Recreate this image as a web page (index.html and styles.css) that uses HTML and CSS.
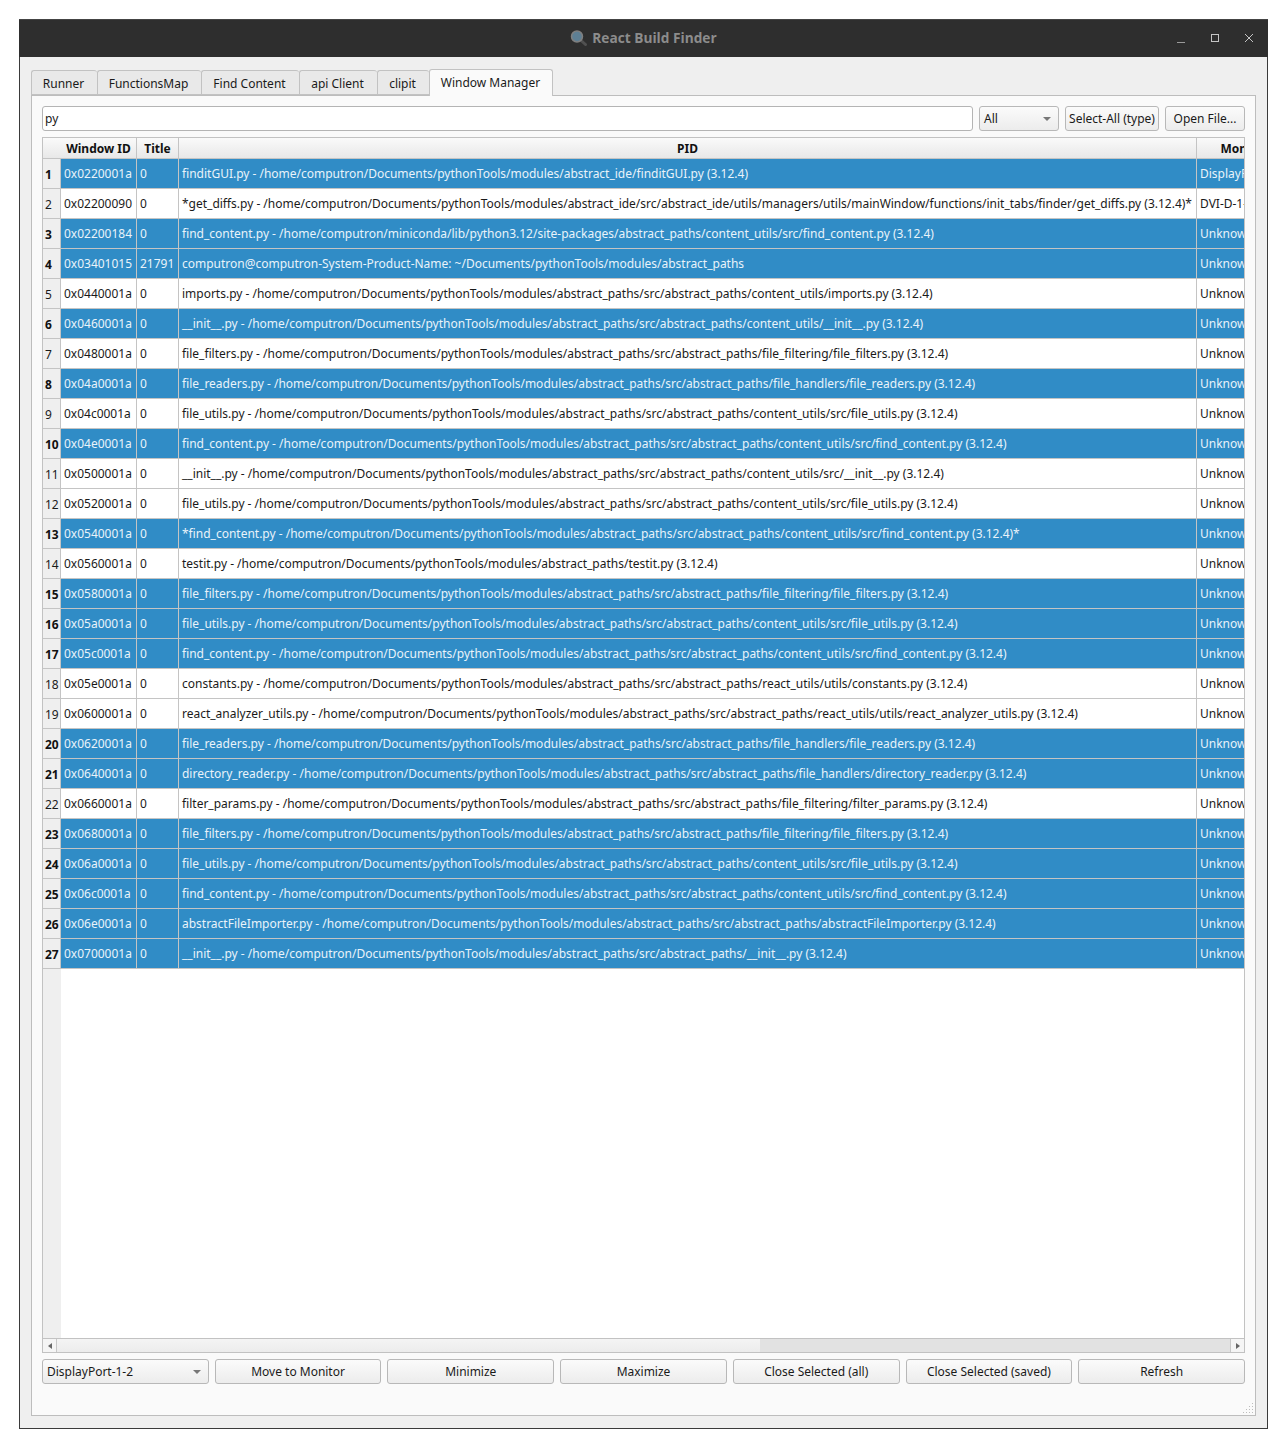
FILE: index.html
```html
<!DOCTYPE html>
<html lang="en">

<head>
    <meta charset="UTF-8">
    <title>React Build Finder</title>
    <link rel="stylesheet" href="styles.css">
</head>

<body>
    <div class="window">
        <!-- title bar -->
        <div class="titlebar">
            <div class="title">
                <svg class="title-icon" width="18" height="16" viewBox="0 0 18 16">
                    <line x1="10.5" y1="10" x2="15.5" y2="14.5" stroke="#505050" stroke-width="3" stroke-linecap="round"/>
                    <circle cx="7" cy="6.5" r="5.5" fill="#5e7f94" stroke="#7f7f7f" stroke-width="1.5"/>
                </svg>
                <span>React Build Finder</span>
            </div>
            <div class="controls">
                <svg width="10" height="10" viewBox="0 0 10 10"><line x1="1" y1="9.5" x2="9" y2="9.5" stroke="#9a9a9a"/></svg>
                <svg width="10" height="10" viewBox="0 0 10 10"><rect x="1.5" y="1.5" width="7" height="7" fill="none" stroke="#c4c4c4"/></svg>
                <svg width="10" height="10" viewBox="0 0 10 10"><path d="M1 1L9 9M9 1L1 9" stroke="#c4c4c4" fill="none"/></svg>
            </div>
        </div>

        <div class="content">
            <!-- tabs -->
            <div class="tabs">
                <div class="tab tab-1">Runner</div>
                <div class="tab tab-2">FunctionsMap</div>
                <div class="tab tab-3">Find Content</div>
                <div class="tab tab-4">api Client</div>
                <div class="tab tab-5">clipit</div>
                <div class="tab tab-active">Window Manager</div>
            </div>

            <div class="pane">
                <div class="toolbar">
                    <div class="search">py</div>
                    <div class="combo combo-type">All<span class="arrow"></span></div>
                    <div class="btn btn-select">Select-All (type)</div>
                    <div class="btn btn-open">Open File...</div>
                </div>

                <div class="table">
                    <div class="gutter"></div>
                    <div class="row head">
                        <div class="num"></div>
                        <div class="cell">Window ID</div>
                        <div class="cell">Title</div>
                        <div class="cell">PID</div>
                        <div class="cell">Monitor</div>
                    </div>
                    <div class="row sel"><div class="num">1</div><div class="cell">0x0220001a</div><div class="cell">0</div><div class="cell">finditGUI.py - /home/computron/Documents/pythonTools/modules/abstract_ide/finditGUI.py (3.12.4)</div><div class="cell">DisplayPort-1-2</div></div>
                    <div class="row"><div class="num">2</div><div class="cell">0x02200090</div><div class="cell">0</div><div class="cell">*get_diffs.py - /home/computron/Documents/pythonTools/modules/abstract_ide/src/abstract_ide/utils/managers/utils/mainWindow/functions/init_tabs/finder/get_diffs.py (3.12.4)*</div><div class="cell">DVI-D-1-1</div></div>
                    <div class="row sel"><div class="num">3</div><div class="cell">0x02200184</div><div class="cell">0</div><div class="cell">find_content.py - /home/computron/miniconda/lib/python3.12/site-packages/abstract_paths/content_utils/src/find_content.py (3.12.4)</div><div class="cell">Unknown</div></div>
                    <div class="row sel"><div class="num">4</div><div class="cell">0x03401015</div><div class="cell">21791</div><div class="cell">computron@computron-System-Product-Name: ~/Documents/pythonTools/modules/abstract_paths</div><div class="cell">Unknown</div></div>
                    <div class="row"><div class="num">5</div><div class="cell">0x0440001a</div><div class="cell">0</div><div class="cell">imports.py - /home/computron/Documents/pythonTools/modules/abstract_paths/src/abstract_paths/content_utils/imports.py (3.12.4)</div><div class="cell">Unknown</div></div>
                    <div class="row sel"><div class="num">6</div><div class="cell">0x0460001a</div><div class="cell">0</div><div class="cell">__init__.py - /home/computron/Documents/pythonTools/modules/abstract_paths/src/abstract_paths/content_utils/__init__.py (3.12.4)</div><div class="cell">Unknown</div></div>
                    <div class="row"><div class="num">7</div><div class="cell">0x0480001a</div><div class="cell">0</div><div class="cell">file_filters.py - /home/computron/Documents/pythonTools/modules/abstract_paths/src/abstract_paths/file_filtering/file_filters.py (3.12.4)</div><div class="cell">Unknown</div></div>
                    <div class="row sel"><div class="num">8</div><div class="cell">0x04a0001a</div><div class="cell">0</div><div class="cell">file_readers.py - /home/computron/Documents/pythonTools/modules/abstract_paths/src/abstract_paths/file_handlers/file_readers.py (3.12.4)</div><div class="cell">Unknown</div></div>
                    <div class="row"><div class="num">9</div><div class="cell">0x04c0001a</div><div class="cell">0</div><div class="cell">file_utils.py - /home/computron/Documents/pythonTools/modules/abstract_paths/src/abstract_paths/content_utils/src/file_utils.py (3.12.4)</div><div class="cell">Unknown</div></div>
                    <div class="row sel"><div class="num">10</div><div class="cell">0x04e0001a</div><div class="cell">0</div><div class="cell">find_content.py - /home/computron/Documents/pythonTools/modules/abstract_paths/src/abstract_paths/content_utils/src/find_content.py (3.12.4)</div><div class="cell">Unknown</div></div>
                    <div class="row"><div class="num">11</div><div class="cell">0x0500001a</div><div class="cell">0</div><div class="cell">__init__.py - /home/computron/Documents/pythonTools/modules/abstract_paths/src/abstract_paths/content_utils/src/__init__.py (3.12.4)</div><div class="cell">Unknown</div></div>
                    <div class="row"><div class="num">12</div><div class="cell">0x0520001a</div><div class="cell">0</div><div class="cell">file_utils.py - /home/computron/Documents/pythonTools/modules/abstract_paths/src/abstract_paths/content_utils/src/file_utils.py (3.12.4)</div><div class="cell">Unknown</div></div>
                    <div class="row sel"><div class="num">13</div><div class="cell">0x0540001a</div><div class="cell">0</div><div class="cell">*find_content.py - /home/computron/Documents/pythonTools/modules/abstract_paths/src/abstract_paths/content_utils/src/find_content.py (3.12.4)*</div><div class="cell">Unknown</div></div>
                    <div class="row"><div class="num">14</div><div class="cell">0x0560001a</div><div class="cell">0</div><div class="cell">testit.py - /home/computron/Documents/pythonTools/modules/abstract_paths/testit.py (3.12.4)</div><div class="cell">Unknown</div></div>
                    <div class="row sel"><div class="num">15</div><div class="cell">0x0580001a</div><div class="cell">0</div><div class="cell">file_filters.py - /home/computron/Documents/pythonTools/modules/abstract_paths/src/abstract_paths/file_filtering/file_filters.py (3.12.4)</div><div class="cell">Unknown</div></div>
                    <div class="row sel"><div class="num">16</div><div class="cell">0x05a0001a</div><div class="cell">0</div><div class="cell">file_utils.py - /home/computron/Documents/pythonTools/modules/abstract_paths/src/abstract_paths/content_utils/src/file_utils.py (3.12.4)</div><div class="cell">Unknown</div></div>
                    <div class="row sel"><div class="num">17</div><div class="cell">0x05c0001a</div><div class="cell">0</div><div class="cell">find_content.py - /home/computron/Documents/pythonTools/modules/abstract_paths/src/abstract_paths/content_utils/src/find_content.py (3.12.4)</div><div class="cell">Unknown</div></div>
                    <div class="row"><div class="num">18</div><div class="cell">0x05e0001a</div><div class="cell">0</div><div class="cell">constants.py - /home/computron/Documents/pythonTools/modules/abstract_paths/src/abstract_paths/react_utils/utils/constants.py (3.12.4)</div><div class="cell">Unknown</div></div>
                    <div class="row"><div class="num">19</div><div class="cell">0x0600001a</div><div class="cell">0</div><div class="cell">react_analyzer_utils.py - /home/computron/Documents/pythonTools/modules/abstract_paths/src/abstract_paths/react_utils/utils/react_analyzer_utils.py (3.12.4)</div><div class="cell">Unknown</div></div>
                    <div class="row sel"><div class="num">20</div><div class="cell">0x0620001a</div><div class="cell">0</div><div class="cell">file_readers.py - /home/computron/Documents/pythonTools/modules/abstract_paths/src/abstract_paths/file_handlers/file_readers.py (3.12.4)</div><div class="cell">Unknown</div></div>
                    <div class="row sel"><div class="num">21</div><div class="cell">0x0640001a</div><div class="cell">0</div><div class="cell">directory_reader.py - /home/computron/Documents/pythonTools/modules/abstract_paths/src/abstract_paths/file_handlers/directory_reader.py (3.12.4)</div><div class="cell">Unknown</div></div>
                    <div class="row"><div class="num">22</div><div class="cell">0x0660001a</div><div class="cell">0</div><div class="cell">filter_params.py - /home/computron/Documents/pythonTools/modules/abstract_paths/src/abstract_paths/file_filtering/filter_params.py (3.12.4)</div><div class="cell">Unknown</div></div>
                    <div class="row sel"><div class="num">23</div><div class="cell">0x0680001a</div><div class="cell">0</div><div class="cell">file_filters.py - /home/computron/Documents/pythonTools/modules/abstract_paths/src/abstract_paths/file_filtering/file_filters.py (3.12.4)</div><div class="cell">Unknown</div></div>
                    <div class="row sel"><div class="num">24</div><div class="cell">0x06a0001a</div><div class="cell">0</div><div class="cell">file_utils.py - /home/computron/Documents/pythonTools/modules/abstract_paths/src/abstract_paths/content_utils/src/file_utils.py (3.12.4)</div><div class="cell">Unknown</div></div>
                    <div class="row sel"><div class="num">25</div><div class="cell">0x06c0001a</div><div class="cell">0</div><div class="cell">find_content.py - /home/computron/Documents/pythonTools/modules/abstract_paths/src/abstract_paths/content_utils/src/find_content.py (3.12.4)</div><div class="cell">Unknown</div></div>
                    <div class="row sel"><div class="num">26</div><div class="cell">0x06e0001a</div><div class="cell">0</div><div class="cell">abstractFileImporter.py - /home/computron/Documents/pythonTools/modules/abstract_paths/src/abstract_paths/abstractFileImporter.py (3.12.4)</div><div class="cell">Unknown</div></div>
                    <div class="row sel"><div class="num">27</div><div class="cell">0x0700001a</div><div class="cell">0</div><div class="cell">__init__.py - /home/computron/Documents/pythonTools/modules/abstract_paths/src/abstract_paths/__init__.py (3.12.4)</div><div class="cell">Unknown</div></div>

                    <!-- horizontal scrollbar -->
                    <div class="scrollbar">
                        <div class="scroll-btn scroll-left"><span class="tri-left"></span></div>
                        <div class="scroll-thumb"></div>
                        <div class="scroll-groove"></div>
                        <div class="scroll-btn scroll-right"><span class="tri-right"></span></div>
                    </div>
                </div>

                <div class="actions">
                    <div class="combo">DisplayPort-1-2<span class="arrow"></span></div>
                    <div class="btn">Move to Monitor</div>
                    <div class="btn">Minimize</div>
                    <div class="btn">Maximize</div>
                    <div class="btn">Close Selected (all)</div>
                    <div class="btn">Close Selected (saved)</div>
                    <div class="btn">Refresh</div>
                </div>

                <svg class="grip" width="14" height="14" viewBox="0 0 14 14" fill="#bdbdbd">
                    <rect x="11" y="2" width="1" height="1"/>
                    <rect x="8" y="5" width="1" height="1"/><rect x="11" y="5" width="1" height="1"/>
                    <rect x="5" y="8" width="1" height="1"/><rect x="8" y="8" width="1" height="1"/><rect x="11" y="8" width="1" height="1"/>
                    <rect x="2" y="11" width="1" height="1"/><rect x="5" y="11" width="1" height="1"/><rect x="8" y="11" width="1" height="1"/><rect x="11" y="11" width="1" height="1"/>
                </svg>
            </div>
        </div>
    </div>
</body>

</html>
```

FILE: styles.css
```css
* {
    box-sizing: border-box;
}

body {
    margin: 0;
    padding: 19px 19px 19px 19px;
    background-color: #ffffff;
    font-family: "Noto Sans", "Open Sans", sans-serif;
    font-size: 11.99px;
    color: #1a1a1a;
}

.window {
    width: 1249px;
    height: 1410px;
    border: 1px solid #3a3a3a;
    border-top: none;
    background-color: #efefef;
    display: flex;
    flex-direction: column;
}

.titlebar {
    height: 38px;
    margin: 0 -1px;
    background-color: #2e2e2e;
    border-top: 1px solid #444444;
    position: relative;
    display: flex;
    align-items: center;
    justify-content: center;
}

.title {
    display: flex;
    align-items: center;
    gap: 4px;
    padding-bottom: 2px;
    color: #8c8c8c;
    font-family: "Open Sans", "Noto Sans", sans-serif;
    font-weight: 700;
    font-size: 13.7px;
}

.controls {
    position: absolute;
    right: 14px;
    top: 13px;
    display: flex;
    gap: 24px;
}

.content {
    flex: 1;
    padding: 13px 11px 12px 11px;
    display: flex;
    flex-direction: column;
}

/* tabs */
.tabs {
    display: flex;
    height: 26px;
    position: relative;
    z-index: 1;
}

.tab {
    height: 25px;
    margin-top: 0;
    padding-right: 2px;
    border: 1px solid #c2c2c2;
    border-right: none;
    border-radius: 3px 3px 0 0;
    background-color: #e9e9e9;
    text-align: center;
    line-height: 26px;
}

.tab-1 { width: 66px; }
.tab-2 { width: 104px; }
.tab-3 { width: 98px; }
.tab-4 { width: 78px; }
.tab-5 { width: 52px; }

.tab-active {
    width: 124px;
    height: 27px;
    margin-top: -1px;
    padding-right: 1px;
    border-right: 1px solid #c2c2c2;
    border-bottom: none;
    background-color: #fafafa;
}

.pane {
    flex: 1;
    margin-top: -1px;
    border: 1px solid #bdbdbd;
    background-color: #fafafa;
    padding: 10px 10px 0 10px;
    position: relative;
    display: flex;
    flex-direction: column;
}

.toolbar {
    display: flex;
    gap: 6px;
    height: 25px;
}

.search {
    width: 931px;
    border: 1px solid #b4b4b4;
    border-radius: 3px;
    background-color: #ffffff;
    padding-left: 2px;
    line-height: 24px;
}

.combo,
.btn {
    height: 25px;
    border: 1px solid #b8b8b8;
    border-radius: 3px;
    background: linear-gradient(#fbfbfb, #ececec);
    line-height: 23px;
}

.combo {
    position: relative;
    padding-left: 4px;
}

.combo-type {
    width: 80px;
}

.arrow {
    position: absolute;
    right: 7px;
    top: 10px;
    border-left: 4px solid transparent;
    border-right: 4px solid transparent;
    border-top: 4px solid #777777;
}

.btn {
    text-align: center;
}

.btn-select {
    width: 94px;
}

.btn-open {
    width: 80px;
}

/* table */
.table {
    margin-top: 6px;
    width: 1203px;
    height: 1216px;
    border: 1px solid #c2c2c2;
    background-color: #ffffff;
    overflow: hidden;
    position: relative;
    display: flex;
    flex-direction: column;
}

.gutter {
    position: absolute;
    left: 0;
    top: 0;
    bottom: 0;
    width: 18px;
    background-color: #efefef;
}

.row {
    display: grid;
    grid-template-columns: 18px 76px 42px 1018px 96px;
    width: 1250px;
    height: 30px;
    line-height: 29px;
    position: relative;
    flex: none;
}

.row > div {
    border-bottom: 1px solid #c4c4c4;
    border-right: 1px solid #c4c4c4;
    padding-left: 3px;
    white-space: nowrap;
    overflow: hidden;
}

.row .num {
    padding-left: 2px;
    line-height: 31px;
    background-color: #efefef;
}

.head {
    height: 21px;
    line-height: 21px;
    font-weight: 700;
    color: #111111;
}

.head .num,
.head .cell {
    background: linear-gradient(#fafafa, #e8e8e8);
    text-align: center;
    padding-left: 0;
}

.row.head > .num {
    border-right: none;
}

.sel .cell {
    background-color: #308cc6;
    color: #e9f3fa;
}

.sel .num {
    font-weight: 700;
    color: #111111;
}

.scrollbar {
    position: absolute;
    left: 0;
    right: 0;
    bottom: 0;
    height: 14px;
    display: flex;
    border-top: 1px solid #c2c2c2;
    background-color: #efefef;
}

.scroll-btn {
    width: 14px;
    flex: none;
    display: flex;
    align-items: center;
    justify-content: center;
    background-color: #f5f5f5;
}

.scroll-left {
    border-right: 1px solid #c8c8c8;
}

.scroll-right {
    border-left: 1px solid #c8c8c8;
}

.tri-left {
    border-top: 3px solid transparent;
    border-bottom: 3px solid transparent;
    border-right: 4px solid #666666;
}

.tri-right {
    border-top: 3px solid transparent;
    border-bottom: 3px solid transparent;
    border-left: 4px solid #666666;
}

.scroll-thumb {
    width: 703px;
    background: linear-gradient(#f4f4f4, #ececec);
}

.scroll-groove {
    flex: 1;
    background-color: #e2e2e2;
}

/* bottom buttons */
.actions {
    margin-top: 6px;
    width: 1203px;
    display: grid;
    grid-template-columns: repeat(7, 1fr);
    gap: 6px;
}

.grip {
    position: absolute;
    right: 0;
    bottom: 0;
}
```
